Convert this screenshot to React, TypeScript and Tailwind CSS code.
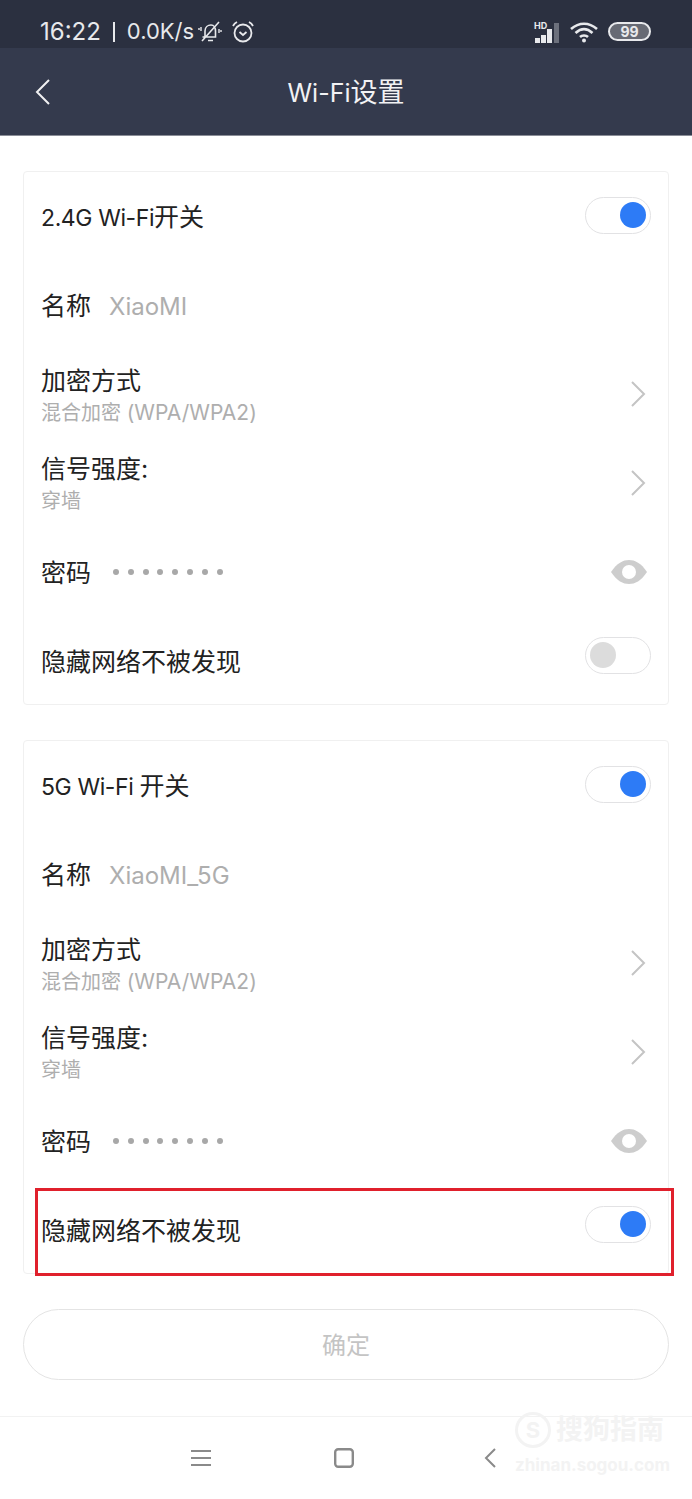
const font = "font-['Inter','Noto_Sans_CJK_SC',sans-serif]";

function Toggle({ on, className = "" }: { on: boolean; className?: string }) {
  return (
    <div className={`flex h-[37px] w-[66px] shrink-0 items-center rounded-full border border-[#e2e2e4] bg-white px-[4px] ${on ? "justify-end" : "justify-start"} ${className}`}>
      <div className={`h-[26px] w-[26px] rounded-full ${on ? "bg-[#2d7bf6]" : "bg-[#dcdcdc]"}`} />
    </div>
  );
}

function Chevron() {
  return (
    <svg width="16" height="28" viewBox="0 0 16 28" className="mr-[5px] shrink-0" fill="none" stroke="#c4c4c4" strokeWidth="2">
      <path d="M2 2 L14 14 L2 26" />
    </svg>
  );
}

function Eye() {
  return (
    <svg width="36" height="24" viewBox="0 0 36 24" className="mr-[4px] shrink-0">
      <path d="M0 12 C6 3 12 0 18 0 C24 0 30 3 36 12 C30 21 24 24 18 24 C12 24 6 21 0 12Z" fill="#cdcdcd" />
      <circle cx="18" cy="12" r="7" fill="#fff" />
    </svg>
  );
}

function Row({ children, short }: { children: React.ReactNode; short?: boolean }) {
  return <div className={`flex items-center justify-between pl-[17px] pr-[17px] ${short ? "h-[88px]" : "h-[89px]"}`}>{children}</div>;
}

function Latin({ children }: { children: React.ReactNode }) {
  return <span className="text-[23px] tracking-[-0.4px]">{children}</span>;
}

function Sub({ title, sub, latin, short }: { title: string; sub: string; latin?: string; short?: boolean }) {
  return (
    <Row short={short}>
      <div className="flex flex-col pt-[3px]">
        <span className="text-[25px] leading-[29px] text-[#222]">{title}</span>
        <span className="mt-[5px] text-[20px] leading-[24px] text-[#aeaeae]">
          {sub}
          {latin && <span className="text-[21px]">{latin}</span>}
        </span>
      </div>
      <Chevron />
    </Row>
  );
}

function Card({ title, tail, name, last }: { title: string; tail: string; name: string; last: boolean }) {
  return (
    <div className="rounded-[4px] border border-[#f0f0f0] bg-white">
      <Row>
        <span className="pt-[2px] text-[25px] text-[#222]">
          <Latin>{title}</Latin>
          {tail}
        </span>
        <Toggle on className="-mt-[3px]" />
      </Row>
      <Row>
        <div className="flex items-center gap-[18px] pt-[2px]">
          <span className="text-[25px] text-[#222]">名称</span>
          <span className="text-[24px] text-[#aeaeae]">{name}</span>
        </div>
      </Row>
      <Sub title="加密方式" sub="混合加密 " latin="(WPA/WPA2)" short />
      <Sub title="信号强度:" sub="穿墙" />
      <Row>
        <div className="flex items-center gap-[22px]">
          <span className="pt-[4px] text-[25px] text-[#222]">密码</span>
          <div className="flex gap-[8.8px]">
            {[0, 1, 2, 3, 4, 5, 6, 7].map((i) => (
              <div key={i} className="h-[6px] w-[6px] rounded-full bg-[#a8a8a8]" />
            ))}
          </div>
        </div>
        <Eye />
      </Row>
      <Row short>
        <span className="pt-[5px] text-[25px] text-[#222]">隐藏网络不被发现</span>
        <Toggle on={last} className="-mt-[10px]" />
      </Row>
    </div>
  );
}

export default function App() {
  return (
    <div className={`relative flex h-[1499px] w-[692px] flex-col overflow-hidden bg-white ${font}`}>
      <div className="flex h-[48px] shrink-0 items-center justify-between bg-[#2b3040] pl-[40px] pr-[41px] pt-[15px] text-[#e8e9ec]">
        <div className="flex items-center">
          <span className="text-[24px]">16:22</span>
          <span className="mx-[12px] h-[20px] w-[2px] bg-[#e8e9ec]" />
          <span className="text-[22px]">0.0K/s</span>
          <svg width="24" height="24" viewBox="0 0 24 24" className="ml-[4px]" fill="none" stroke="#e8e9ec" strokeWidth="1.6">
            <path d="M7 17 V11 C7 7 10 5 13 5 C16 5 17.5 8 17.5 11 V17 H4.5 M21 2 L4 21 M10 20.5 H15" />
            <path d="M3 7 V11 M1 8 V10 M21 9 V13 M23 10 V12" strokeWidth="1.4" />
          </svg>
          <svg width="24" height="24" viewBox="0 0 24 24" className="ml-[9px]" fill="none" stroke="#e8e9ec" strokeWidth="1.8">
            <circle cx="12" cy="13" r="8.5" />
            <path d="M8.5 12 L12 15 L15.5 12 M2 6 C3 4 4 3 6 2 M22 6 C21 4 20 3 18 2" />
          </svg>
        </div>
        <div className="flex items-center">
          <div className="relative h-[22px] w-[27px]">
            <span className="absolute left-0 top-0 text-[9px] font-bold leading-[10px]">HD</span>
            <svg width="27" height="22" viewBox="0 0 27 22" className="absolute inset-0">
              <rect x="1" y="17" width="5" height="5" fill="#e8e9ec" />
              <rect x="7" y="14" width="5" height="8" fill="#e8e9ec" />
              <rect x="13" y="8" width="5" height="14" fill="#e8e9ec" />
              <rect x="20" y="2" width="5" height="20" fill="#6c707c" />
            </svg>
          </div>
          <svg width="28" height="22" viewBox="0 0 28 22" className="ml-[9px]" fill="none" stroke="#e8e9ec" strokeWidth="2.6">
            <path d="M1 8 C9 1 19 1 27 8 M5.5 12 C11 7 17 7 22.5 12 M10 16 C12 14 16 14 18 16" />
            <circle cx="14" cy="19.5" r="2" fill="#e8e9ec" stroke="none" />
          </svg>
          <div className="ml-[10px] flex h-[19px] w-[43px] items-center justify-center rounded-full border-2 border-[#e8e9ec] bg-[#676a74] text-[14px] font-bold leading-none">
            99
          </div>
        </div>
      </div>

      <div className="relative flex h-[88px] shrink-0 items-center justify-center border-b border-[#8a8d97] bg-[#343a4d] pt-[3px]">
        <svg width="16" height="26" viewBox="0 0 16 26" className="absolute left-[35px] top-[31px]" fill="none" stroke="#f0f0f2" strokeWidth="2">
          <path d="M14 1 L2 13 L14 25" />
        </svg>
        <span className="text-[27px] text-[#f2f2f4]">
          <span className="text-[25px]">Wi-Fi</span>设置
        </span>
      </div>

      <div className="flex flex-1 flex-col px-[23px] pt-[35px]">
        <Card title="2.4G Wi-Fi" tail="开关" name="XiaoMI" last={false} />
        <div className="mt-[35px]">
          <Card title="5G Wi-Fi " tail="开关" name="XiaoMI_5G" last />
        </div>
        <div className="mt-[35px] flex h-[71px] items-center justify-center rounded-full border border-[#e4e4e4] pt-[3px] text-[24px] text-[#c4c4c4]">
          确定
        </div>
      </div>

      <div className="flex h-[83px] shrink-0 items-center justify-center border-t border-[#f2f2f2] pr-[5px]">
        <svg width="20" height="18" viewBox="0 0 20 18" fill="none" stroke="#8a8a8a" strokeWidth="2">
          <path d="M0 2 H20 M0 9 H20 M0 16 H20" />
        </svg>
        <svg width="20" height="20" viewBox="0 0 20 20" className="ml-[123px]" fill="none" stroke="#8a8a8a" strokeWidth="2.4">
          <rect x="1.2" y="1.2" width="17.6" height="17.6" rx="3" />
        </svg>
        <svg width="12" height="20" viewBox="0 0 12 20" className="ml-[130px]" fill="none" stroke="#8a8a8a" strokeWidth="2">
          <path d="M11 1 L2 10 L11 19" />
        </svg>
      </div>

      <div className="absolute left-[35px] top-[1188px] h-[88px] w-[639px] border-[3px] border-[#e0202c]" />

      <div className="absolute left-[515px] top-[1412px] flex w-[152px] flex-col text-[#f3f3f3]">
        <div className="flex items-center gap-[5px]">
          <div className="flex h-[36px] w-[36px] shrink-0 items-center justify-center rounded-full border-[3px] border-[#f3f3f3] text-[22px] font-bold leading-none">S</div>
          <span className="whitespace-nowrap text-[27px] font-bold leading-[36px]">搜狗指南</span>
        </div>
        <span className="mt-[8px] whitespace-nowrap text-[17px] font-bold leading-[18px]">zhinan.sogou.com</span>
      </div>
    </div>
  );
}
